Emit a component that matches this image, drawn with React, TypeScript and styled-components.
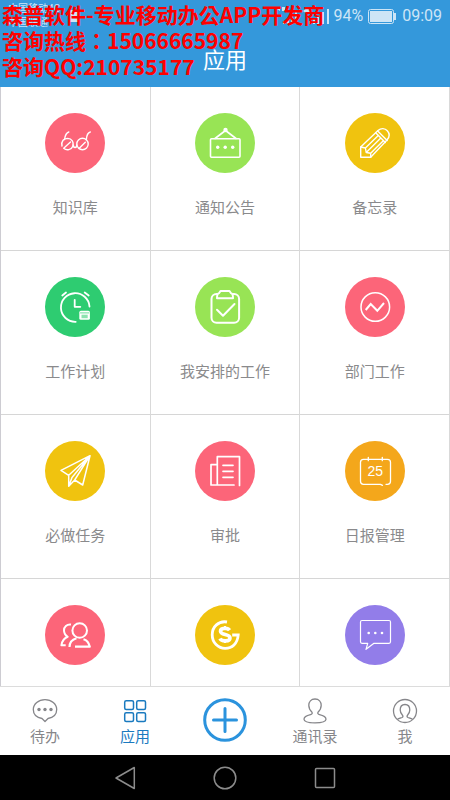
import React from "react";
import styled, { createGlobalStyle } from "styled-components";

const GlobalStyle = createGlobalStyle`
  *, *::before, *::after { box-sizing: border-box; }
  body {
    margin: 0;
    background: #fff;
    font-family: "Noto Sans CJK SC", sans-serif;
  }
  button {
    margin: 0;
    padding: 0;
    border: 0;
    background: none;
    font: inherit;
    color: inherit;
    cursor: pointer;
  }
  svg { display: block; }
`;

const Screen = styled.div`
  position: relative;
  display: flex;
  flex-direction: column;
  height: 100vh;
  overflow: hidden;
`;

const Header = styled.header`
  flex: none;
  background: #3498db;
  color: #fff;
`;

const StatusBar = styled.div`
  display: flex;
  align-items: center;
  justify-content: space-between;
  height: 32px;
  padding: 0 8px;
  color: #cde5f6;
  font-family: Roboto, "Noto Sans CJK SC", sans-serif;
`;

const Carriers = styled.div`
  font-size: 10px;
  line-height: 14px;
`;

const StatusGroup = styled.div`
  display: flex;
  align-items: center;
  font-size: 16px;
  line-height: 20px;
`;

const CarrierGroup = styled.div`
  display: flex;
  align-items: center;
  gap: 8px;
`;

const Percent = styled.span`
  margin-left: 4px;
  margin-right: 5px;
`;

const Clock = styled.time`
  margin-left: 6px;
`;

const Title = styled.h1`
  margin: 0;
  height: 55px;
  font-size: 22px;
  line-height: 52px;
  font-weight: 400;
  text-align: center;
`;

const Watermark = styled.div`
  position: absolute;
  top: 1px;
  left: 2px;
  color: #f00;
  font-family: "Noto Sans CJK TC", sans-serif;
  font-size: 21px;
  line-height: 26px;
  font-weight: 700;
  white-space: nowrap;
  pointer-events: none;
`;

const AppGrid = styled.main`
  flex: 1;
  min-height: 0;
  display: grid;
  grid-template-columns: repeat(3, 1fr);
  grid-auto-rows: 164px;
  overflow: hidden;
  border-left: 1px solid #cdccd2;
`;

const AppCell = styled.button`
  display: flex;
  flex-direction: column;
  align-items: center;
  gap: 24px;
  padding-top: 26px;
  border-right: 1px solid #d9d9d9;
  border-bottom: 1px solid #d6d6d6;
  color: #8a8a8c;
  font-size: 15px;
  line-height: 20px;
`;

const Disc = styled.span<{ $color: string }>`
  flex: none;
  width: 60px;
  height: 60px;
  border-radius: 50%;
  background: ${(p) => p.$color};
`;

const TabBar = styled.nav`
  flex: none;
  display: grid;
  grid-template-columns: repeat(5, 1fr);
  height: 69px;
  border-top: 1px solid #dcdcdc;
  background: #fff;
`;

const Tab = styled.button<{ $active?: boolean }>`
  display: flex;
  flex-direction: column;
  align-items: center;
  gap: 2px;
  padding-top: 11px;
  color: ${(p) => (p.$active ? "#1a7abf" : "#86868a")};
  font-size: 15px;
  line-height: 20px;
`;

const SystemBar = styled.nav`
  flex: none;
  display: grid;
  grid-template-columns: repeat(3, 1fr);
  height: 45px;
  padding: 0 calc(100% / 6);
  background: #000;
  color: #8c8c8c;
`;

const SystemButton = styled.button`
  display: flex;
  align-items: center;
  justify-content: center;
`;

const Glyph = ({ children, width = 2 }: { children: React.ReactNode; width?: number }) => (
  <svg
    width="60"
    height="60"
    viewBox="0 0 60 60"
    fill="none"
    stroke="#fff"
    strokeWidth={width}
    strokeLinecap="round"
    strokeLinejoin="round"
    aria-hidden="true"
  >
    {children}
  </svg>
);

const Dots = ({ xs, y, r }: { xs: number[]; y: number; r: number }) => (
  <g fill="#fff" stroke="none">
    {xs.map((x) => (
      <circle key={x} cx={x} cy={y} r={r} />
    ))}
  </g>
);

const pink = "#fc6579";
const lime = "#98e455";
const yellow = "#f0c30f";

type AppItem = { name: string; hideLabel?: boolean; color: string; icon: React.ReactNode };

const apps: AppItem[] = [
  {
    name: "知识库",
    color: pink,
    icon: (
      <Glyph width={1.4}>
        <path d="M17 33c-1-5 2-7.600 5.700-7.600a5.700 5.700 0 1 1-4 9.900L25.500 29" />
        <circle cx="37.500" cy="31" r="5.700" />
        <path d="M34 35.500 40.300 29.300M28.300 32c0 3.300 3.500 3.300 3.500 0M19.500 26.500c.6-4 1.600-6.700 4.300-7.500M41.300 26.700c.3-4.300 1.400-7 4-7.700" />
      </Glyph>
    ),
  },
  {
    name: "通知公告",
    color: lime,
    icon: (
      <Glyph width={1.6}>
        <rect x="15.500" y="25.700" width="29.500" height="18.600" rx="1" />
        <path d="M20 25.500 30.500 17.500 41 25.500" />
        <Dots xs={[30.5]} y={17} r={2.2} />
        <Dots xs={[22.7, 30.2, 37.7]} y={34.2} r={1.7} />
      </Glyph>
    ),
  },
  {
    name: "备忘录",
    color: yellow,
    icon: (
      <Glyph width={1.4}>
        <path d="M15.700 44.300V34L33 17.500c3-2.700 7-2.500 9.300.3 2.700 3 2.300 6.400-.3 9.200L25.700 44.300z" />
        <path d="M30.700 19.700 40.300 29.500M32.700 17.900 42.200 27.500M15.700 34l4.700 1 .8 4.500 4.500.8v4M20.400 35 33.300 22.500M21.200 39.500 35.300 25.500M25.700 40.300 37.800 28.200" />
      </Glyph>
    ),
  },
  {
    name: "工作计划",
    color: "#2ecc71",
    icon: (
      <Glyph width={1.8}>
        <path d="M30.700 44.800A14.300 14.300 0 1 1 44.500 29.500M29.700 22.800v7h5.600M17.300 18.500l3.700-3M39.700 15.500l4 3" />
        <rect x="34.300" y="33.800" width="10.600" height="9" rx="1.600" fill="#fff" stroke="none" />
        <path d="M35.500 35.900h8.300" stroke="#2ecc71" strokeWidth="0.700" />
        <rect x="36.500" y="37.700" width="6.200" height="3.500" fill="#8ce3b0" stroke="none" />
      </Glyph>
    ),
  },
  {
    name: "我安排的工作",
    color: lime,
    icon: (
      <Glyph width={2}>
        <path d="M22 17h-.5a5 5 0 0 0-5 5v18.800a5 5 0 0 0 5 5h17.600a5 5 0 0 0 5-5V22a5 5 0 0 0-5-5H38" />
        <path d="M22 21.300c0-3 .3-4.800 2-5l1.500-2.300h9l1.500 2.300c1.700.2 2 2 2 5z" />
        <path d="M22 32.800 28 38.800 39.500 27" />
      </Glyph>
    ),
  },
  {
    name: "部门工作",
    color: pink,
    icon: (
      <Glyph width={1.5}>
        <circle cx="30.300" cy="30" r="14.300" />
        <path d="M20.700 33 25.700 27 32.300 33.800 39 26" strokeWidth="2" strokeLinecap="butt" strokeLinejoin="miter" />
      </Glyph>
    ),
  },
  {
    name: "必做任务",
    color: yellow,
    icon: (
      <Glyph width={1.500}>
        <path d="M45 14.700 16 29.300l7.700 5v11l6-6.300 8 5zM23.700 34.300 45 14.700 29.700 39M23.700 45.300 27 36.500 45 14.700" />
      </Glyph>
    ),
  },
  {
    name: "审批",
    color: pink,
    icon: (
      <Glyph width={1.700}>
        <path d="M44.500 44.500V15.700H22.300V44M22.300 23.700H16V44h23M28 24.300h10M28 30.300h10M28 36.300h10" />
      </Glyph>
    ),
  },
  {
    name: "日报管理",
    color: "#f4a71b",
    icon: (
      <Glyph width={1.300}>
        <path d="M41 43.300h1.500a3 3 0 0 0 3-3v-19a3 3 0 0 0-3-3h-24a3 3 0 0 0-3 3v19a3 3 0 0 0 3 3h17l2 1M23.300 16.300v3.400M37.300 16.300v3.400" />
        <text
          x="30.300"
          y="35"
          textAnchor="middle"
          fontFamily="Liberation Sans, sans-serif"
          fontSize="14"
          fill="#fff"
          stroke="none"
        >
          25
        </text>
      </Glyph>
    ),
  },
  {
    name: "通讯",
    hideLabel: true,
    color: pink,
    icon: (
      <Glyph width={2}>
        <circle cx="34.700" cy="25.500" r="7.300" />
        <path d="M24.500 42c0-4 2.500-7.500 7-8.800M38.500 34.300c3.500 1 5.500 4 6.300 7.400H30" strokeLinecap="butt" strokeWidth="2.200" />
        <path d="M26 19.500c-4.300-.5-7 2.300-7 5.800 0 3 1.300 5 3.700 6.500-3.700 1.500-5.700 4.300-6.300 8.500h4.300" strokeLinecap="butt" />
      </Glyph>
    ),
  },
  {
    name: "财务",
    hideLabel: true,
    color: yellow,
    icon: (
      <Glyph width={2.800}>
        <path d="M32 17c-8.500-1.500-14.800 5-14.800 12.700 0 8 6 13.600 13 13.600 6.800 0 12.300-4.500 13-13.300h-6" strokeLinecap="butt" strokeLinejoin="miter" />
        <path d="M34.500 25.200c-1.600-2.600-9-2.500-9 1 0 4.200 9.500 2.400 9.500 6.700 0 3.900-8.500 3.800-10 .6" strokeWidth="3.600" strokeLinecap="butt" />
        <path d="M30 21v3M30 35v3" strokeWidth="2" strokeLinecap="butt" />
      </Glyph>
    ),
  },
  {
    name: "消息",
    hideLabel: true,
    color: "#927de9",
    icon: (
      <Glyph width={1.200}>
        <path d="M17 15.500h27a1.500 1.500 0 0 1 1.500 1.500v19.800a1.500 1.500 0 0 1-1.500 1.500H29l-8 6 1.700-6H17a1.500 1.500 0 0 1-1.500-1.500V17a1.500 1.500 0 0 1 1.500-1.500z" />
        <Dots xs={[23.7, 30.3, 37]} y={28} r={1.3} />
      </Glyph>
    ),
  },
];

const TabIcon = ({ children }: { children: React.ReactNode }) => (
  <svg width="26" height="26" viewBox="0 0 26 26" fill="none" stroke="currentColor" strokeWidth="1.300" strokeLinejoin="round" aria-hidden="true">
    {children}
  </svg>
);

export default function App() {
  return (
    <Screen>
      <GlobalStyle />
      <Header>
        <StatusBar>
          <CarrierGroup>
            <Carriers>
              中国移动4G
              <br />
              中国联通
            </Carriers>
            <svg width="12" height="14" viewBox="0 0 12 14" fill="currentColor" aria-hidden="true">
              <path d="M1 1h7l3 3v8a1 1 0 0 1-1 1H2a1 1 0 0 1-1-1z" />
            </svg>
          </CarrierGroup>
          <StatusGroup>
            <svg width="54" height="20" viewBox="0 0 54 20" fill="currentColor" aria-hidden="true">
              <path d="M2 3 5 1v4zM7 1h3v4H7zM8 15h2v3H8zM12 12h2v6h-2zM16 9h2v9h-2zM20 6h2v12h-2zM28 5l4-3 4 3-4 3zM34 15h2v3h-2zM38 12h2v6h-2zM42 9h2v9h-2zM47 6h2v12h-2zM52 3h2v15h-2z" />
            </svg>
            <Percent>94%</Percent>
            <svg width="28" height="15" viewBox="0 0 28 15" aria-hidden="true">
              <rect x="0.500" y="0.500" width="25" height="14" rx="2" fill="none" stroke="currentColor" />
              <rect x="2" y="2" width="22" height="11" fill="currentColor" />
              <path d="M26 4h2v7h-2z" fill="currentColor" />
            </svg>
            <Clock>09:09</Clock>
          </StatusGroup>
        </StatusBar>
        <Title>应用</Title>
      </Header>

      <AppGrid>
        {apps.map((app) => (
          <AppCell key={app.name} type="button" aria-label={app.name}>
            <Disc $color={app.color}>{app.icon}</Disc>
            {!app.hideLabel && <span>{app.name}</span>}
          </AppCell>
        ))}
      </AppGrid>

      <TabBar>
        <Tab type="button">
          <TabIcon>
            <path d="M10 20.500C4.500 19.500 1.300 16 1.300 11.500 1.300 6 6.500 1.700 13 1.700S24.700 6 24.700 11.500c0 4.500-3.200 8-8.700 9L13 23.500z" />
            <g fill="currentColor" stroke="none">
              <circle cx="7" cy="11.500" r="1.700" />
              <circle cx="13" cy="11.500" r="1.700" />
              <circle cx="19" cy="11.500" r="1.700" />
            </g>
          </TabIcon>
          待办
        </Tab>
        <Tab type="button" $active aria-current="page">
          <TabIcon>
            <g strokeWidth="1.500">
              <rect x="2.700" y="2.700" width="8.800" height="8.800" rx="1.500" />
              <rect x="14.700" y="2.700" width="8.800" height="8.800" rx="1.500" />
              <rect x="2.700" y="14.700" width="8.800" height="8.800" rx="1.500" />
              <rect x="14.700" y="14.700" width="8.800" height="8.800" rx="1.500" />
            </g>
          </TabIcon>
          应用
        </Tab>
        <Tab type="button" aria-label="新建">
          <svg width="44" height="44" viewBox="0 0 44 44" fill="none" stroke="#2b93dd" strokeWidth="3" strokeLinecap="round" aria-hidden="true">
            <circle cx="22" cy="22" r="20.300" />
            <path d="M22 10.500v23M10.500 22h23" />
          </svg>
        </Tab>
        <Tab type="button">
          <TabIcon>
            <path d="M13 1c4 0 6.200 2.800 6.200 6.300 0 3.200-1.200 5.200-3.200 7-.8 1 .2 2 1.500 2.300 4 .9 6.500 2.200 6.500 4.700 0 2-2.500 3.500-11 3.500s-11-1.500-11-3.500c0-2.500 2.500-3.800 6.500-4.700 1.300-.3 2.300-1.300 1.500-2.300-2-1.800-3.200-3.800-3.200-7C6.800 3.800 9 1 13 1z" />
          </TabIcon>
          通讯录
        </Tab>
        <Tab type="button">
          <TabIcon>
            <circle cx="13" cy="13" r="11.500" />
            <path d="M5.500 21.300c1-.9 3-1.300 4.500-1.800 1.200-.5 1.200-1.500.5-2.300-1.300-1.500-2.300-3-2.300-5.300 0-3.300 2-5.400 4.800-5.400s4.800 2.100 4.800 5.400c0 2.300-1 3.800-2.300 5.300-.7.800-.7 1.800.5 2.300 1.500.5 3.500.9 4.500 1.800" />
          </TabIcon>
          我
        </Tab>
      </TabBar>

      <SystemBar>
        <SystemButton type="button" aria-label="返回">
          <svg width="24" height="24" viewBox="0 0 24 24" fill="none" stroke="currentColor" strokeWidth="1.500" strokeLinejoin="round" aria-hidden="true">
            <path d="M21.300 1.500v21L3 12z" />
          </svg>
        </SystemButton>
        <SystemButton type="button" aria-label="主页">
          <svg width="24" height="24" viewBox="0 0 24 24" fill="none" stroke="currentColor" strokeWidth="1.500" aria-hidden="true">
            <circle cx="12" cy="12" r="10.800" />
          </svg>
        </SystemButton>
        <SystemButton type="button" aria-label="最近任务">
          <svg width="24" height="24" viewBox="0 0 24 24" fill="none" stroke="currentColor" strokeWidth="1.500" aria-hidden="true">
            <rect x="2.500" y="2.500" width="19" height="19" rx="1" />
          </svg>
        </SystemButton>
      </SystemBar>

      <Watermark>
        森普软件-专业移动办公APP开发商
        <br />
        咨询热线：15066665987
        <br />
        咨询QQ:210735177
      </Watermark>
    </Screen>
  );
}
